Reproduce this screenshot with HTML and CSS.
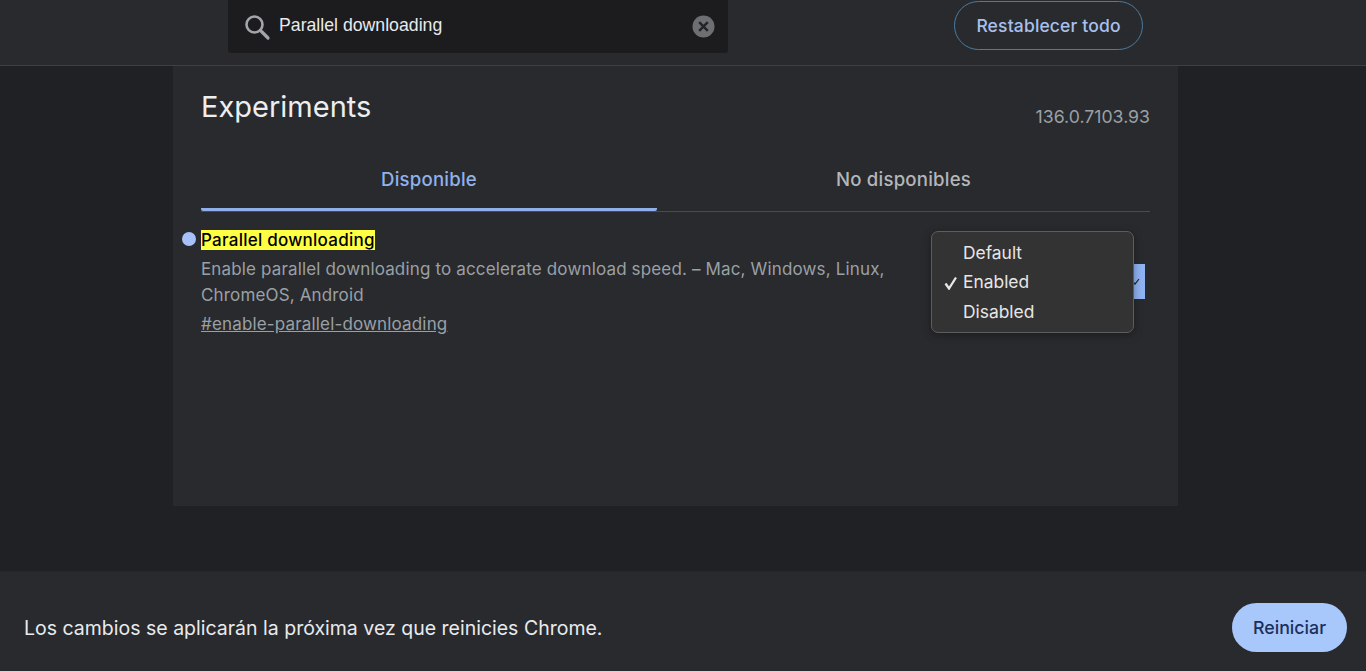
FILE: index.html
```html
<!DOCTYPE html>
<html lang="es">
<head>
<meta charset="utf-8">
<title>Experiments</title>
<link rel="stylesheet" href="styles.css">
</head>
<body>
<div class="page">
  <header class="topbar">
    <div class="search">
      <svg class="search-icon" width="28" height="28" viewBox="0 0 28 28"><circle cx="11.5" cy="11.5" r="8" fill="none" stroke="#a2a5a9" stroke-width="2.6"/><path d="M17.5 17.5L25 25" stroke="#a2a5a9" stroke-width="3.2" stroke-linecap="round"/></svg>
      <span class="search-text">Parallel downloading</span>
      <svg class="clear-icon" width="23" height="23" viewBox="0 0 23 23"><circle cx="11.5" cy="11.5" r="11" fill="#6d6f72"/><path d="M7.2 7.2L15.8 15.8M15.8 7.2L7.2 15.8" stroke="#232427" stroke-width="2.4"/></svg>
    </div>
    <button class="reset">Restablecer todo</button>
  </header>
  <main class="main">
    <section class="panel">
      <div class="title-row">
        <h1>Experiments</h1>
        <span class="version">136.0.7103.93</span>
      </div>
      <div class="tabs">
        <div class="tab active">Disponible</div>
        <div class="tab other">No disponibles</div>
      </div>
      <div class="flag">
        <div class="flag-text">
          <div class="flag-name"><span class="dot"></span><mark>Parallel downloading</mark></div>
          <p class="flag-desc">Enable parallel downloading to accelerate download speed. – Mac, Windows, Linux, ChromeOS, Android</p>
          <a class="flag-link">#enable-parallel-downloading</a>
        </div>
        <div class="select">
          <svg width="10" height="8" viewBox="0 0 10 8"><path d="M1 2l4 4 4-5" fill="none" stroke="#202124" stroke-width="1.2"/></svg>
        </div>
        <div class="menu">
          <div class="opt">Default</div>
          <div class="opt"><svg class="check" width="14" height="14" viewBox="0 0 14 14"><path d="M1.5 7.5L5 12.5L12 1.5" fill="none" stroke="#e8e8e8" stroke-width="2.3"/></svg>Enabled</div>
          <div class="opt">Disabled</div>
        </div>
      </div>
    </section>
  </main>
  <footer class="footer">
    <span class="notice">Los cambios se aplicarán la próxima vez que reinicies Chrome.</span>
    <button class="restart">Reiniciar</button>
  </footer>
</div>
</body>
</html>
```
FILE: styles.css
```css
* { box-sizing: border-box; }
html, body { margin: 0; height: 671px; overflow: hidden; }
body { background: #202124; font-family: Inter, "Liberation Sans", sans-serif; color: #e8eaed; }
.page { display: flex; flex-direction: column; height: 671px; }

.topbar { height: 66px; flex: none; background: #292a2d; border-bottom: 1px solid #3f4043; display: flex; align-items: flex-start; padding-left: 228px; }
.search { width: 500px; height: 53px; background: #1c1c1e; border-radius: 0 0 3px 3px; display: flex; align-items: center; padding: 0 13px 3px 15px; }
.search-icon { flex: none; margin-top: 3px; }
.search-text { flex: 1; margin-left: 8px; font-family: "Liberation Sans", Arial, sans-serif; font-size: 17.7px; color: #e8eaed; }
.clear-icon { flex: none; margin-top: 3px; }
.reset { margin: 1px 0 0 226px; width: 189px; height: 49px; border-radius: 25px; background: transparent; border: 1.5px solid #4a7ba3; color: #a8c0ee; font: 500 17.5px Inter, sans-serif; letter-spacing: 0.15px; }

.main { flex: 1; }
.panel { width: 1005px; height: 440px; margin-left: 173px; background: #292a2d; padding: 0 28px; position: relative; }
.title-row { display: flex; justify-content: space-between; height: 80px; }
h1 { margin: 19px 0 0; font: 400 29px/44px Inter, sans-serif; color: #eceef0; }
.version { margin-top: 39px; font-size: 17.7px; line-height: 24px; color: #9aa0a6; }
.tabs { display: flex; height: 66px; border-bottom: 1px solid #4a4b4e; }
.tab { flex: none; text-align: center; font-weight: 500; font-size: 18.6px; line-height: 24px; padding-top: 21px; color: #b3b6ba; letter-spacing: 0.2px; }
.tab.active { width: 456px; height: 65px; color: #8fb2ec; border-bottom: 3px solid #8fb0ea; border-radius: 0 0 2px 2px; }
.tab.other { flex: 1; }

.flag { position: relative; padding-top: 17px; }
.flag-text { width: 700px; }
.flag-name { position: relative; font-size: 17px; line-height: 22px; font-weight: 500; height: 22px; }
.dot { position: absolute; left: -19px; top: 3px; width: 14px; height: 14px; border-radius: 50%; background: #a6c0f8; }
mark { background: #ffff44; color: #000; letter-spacing: 0.25px; }
.flag-desc { margin: 5px 0 0; font-size: 17px; line-height: 26px; color: #9aa0a6; letter-spacing: 0.15px; }
.flag-link { display: block; margin-top: 4px; font-size: 17px; line-height: 25px; color: #9aa0a6; text-decoration: underline; letter-spacing: 0.16px; }
.select { position: absolute; left: 900px; top: 52px; width: 44px; height: 35px; background: #8fb4f4; display: flex; align-items: center; justify-content: flex-end; padding-right: 5px; }
.menu { position: absolute; left: 730px; top: 19px; width: 203px; height: 102px; background: #333333; border: 1px solid #5c5d5f; border-radius: 7px; padding: 5.5px 0 0 31px; box-shadow: 0 2px 8px rgba(0,0,0,.35); }
.opt { position: relative; font-size: 17.4px; line-height: 29.7px; color: #e6e6e6; }
.check { position: absolute; left: -19px; top: 9px; }

.footer { height: 100px; flex: none; background: #292a2d; border-top: 1px solid #26272a; display: flex; align-items: center; padding: 0 19px 0 24px; justify-content: space-between; }
.notice { margin-top: 12px; font-size: 19.5px; color: #e8eaed; }
.restart { width: 115px; height: 49px; margin-top: 11px; border: 0; border-radius: 25px; background: #a8c7fa; color: #1c2f5c; font: 500 17.8px Inter, sans-serif; }
```
